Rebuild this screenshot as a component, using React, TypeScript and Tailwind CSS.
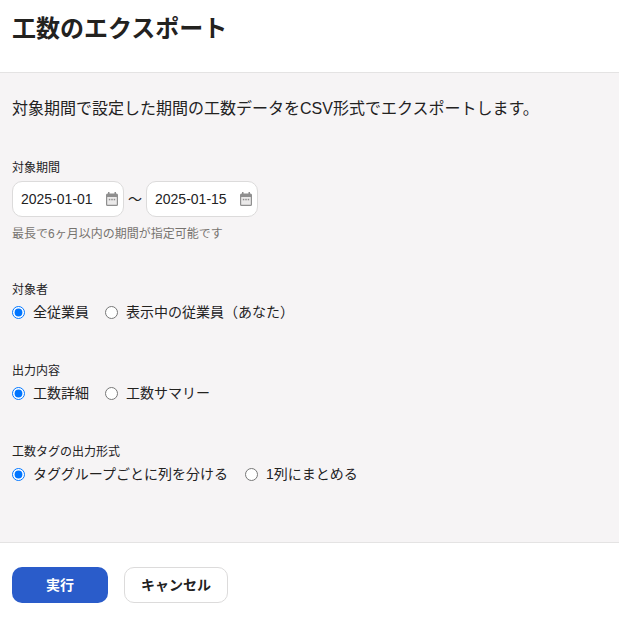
const FONT = "font-['Liberation_Sans','Noto_Sans_CJK_JP',sans-serif]";

function CalendarIcon() {
  return (
    <svg width="12" height="14" viewBox="0 0 12 14" className="shrink-0" aria-hidden="true">
      <path fill="#8f8f8f" d="M2 0h1.5v1.5h5V0H10v1.5h.5A1.5 1.5 0 0 1 12 3v9.5a1.5 1.5 0 0 1-1.5 1.5h-9A1.5 1.5 0 0 1 0 12.500V3a1.500 1.500 0 0 1 1.500-1.500H2V0z" />
      <rect x="1.2" y="5" width="9.6" height="7.800" rx="0.5" fill="#ebeaea" />
      <rect x="2.800" y="6.800" width="1.500" height="1.500" fill="#8f8f8f" />
      <rect x="5.250" y="6.800" width="1.500" height="1.500" fill="#8f8f8f" />
      <rect x="7.700" y="6.800" width="1.500" height="1.500" fill="#8f8f8f" />
    </svg>
  );
}

function DateField({ value }: { value: string }) {
  return (
    <div className="flex h-9 w-28 items-center justify-between rounded-[10px] border border-[#dcdbdb] bg-white pl-2 pr-[5px] text-sm text-[#23221f]">
      <span>{value}</span>
      <CalendarIcon />
    </div>
  );
}

function RadioGroup({ name, options, className = "gap-4" }: { name: string; options: string[]; className?: string }) {
  return (
    <div className={`flex h-6 items-center ${className}`}>
      {options.map((option, index) => (
        <label key={option} className="flex items-center gap-2 text-sm text-[#23221f]">
          <input type="radio" name={name} defaultChecked={index === 0} className="m-0 size-[13px]" />
          {option}
        </label>
      ))}
    </div>
  );
}

function Section({ label, className, children }: { label: string; className: string; children: React.ReactNode }) {
  return (
    <div className={className}>
      <div className="text-xs leading-[19px] text-[#23221f]">{label}</div>
      {children}
    </div>
  );
}

export default function App() {
  return (
    <div className={`flex h-[617px] w-[619px] flex-col overflow-hidden bg-white ${FONT}`}>
      <header className="flex h-[73px] shrink-0 items-start border-b border-[#e4e3e3] px-3 pt-[12px]">
        <h1 className="text-2xl leading-[34px] font-bold text-[#23221f]">工数のエクスポート</h1>
      </header>
      <main className="flex h-[469px] shrink-0 flex-col bg-[#f6f4f5] px-3">
        <p className="mt-6 text-base leading-6 text-[#23221f]">
          対象期間で設定した期間の工数データをCSV形式でエクスポートします。
        </p>
        <Section label="対象期間" className="mt-[38px]">
          <div className="mt-[3px] flex items-center gap-1">
            <DateField value="2025-01-01" />
            <span className="text-sm text-[#23221f]">〜</span>
            <DateField value="2025-01-15" />
          </div>
          <div className="mt-2 text-xs leading-[18px] text-[#76736f]">最長で6ヶ月以内の期間が指定可能です</div>
        </Section>
        <Section label="対象者" className="mt-[38px]">
          <RadioGroup name="target" options={["全従業員", "表示中の従業員（あなた）"]} />
        </Section>
        <Section label="出力内容" className="mt-[38px]">
          <RadioGroup name="content" options={["工数詳細", "工数サマリー"]} />
        </Section>
        <Section label="工数タグの出力形式" className="mt-[38px]">
          <RadioGroup name="tag" className="gap-[17px]" options={["タググループごとに列を分ける", "1列にまとめる"]} />
        </Section>
      </main>
      <footer className="flex flex-1 items-start gap-4 border-t border-[#e4e3e3] bg-white px-3 pt-6">
        <button className="h-9 w-24 rounded-[10px] bg-[#2a5cca] text-sm font-bold text-white">実行</button>
        <button className="h-9 w-[104px] rounded-[10px] border border-[#dcdbdb] bg-white text-sm font-bold text-[#23221f]">
          キャンセル
        </button>
      </footer>
    </div>
  );
}
